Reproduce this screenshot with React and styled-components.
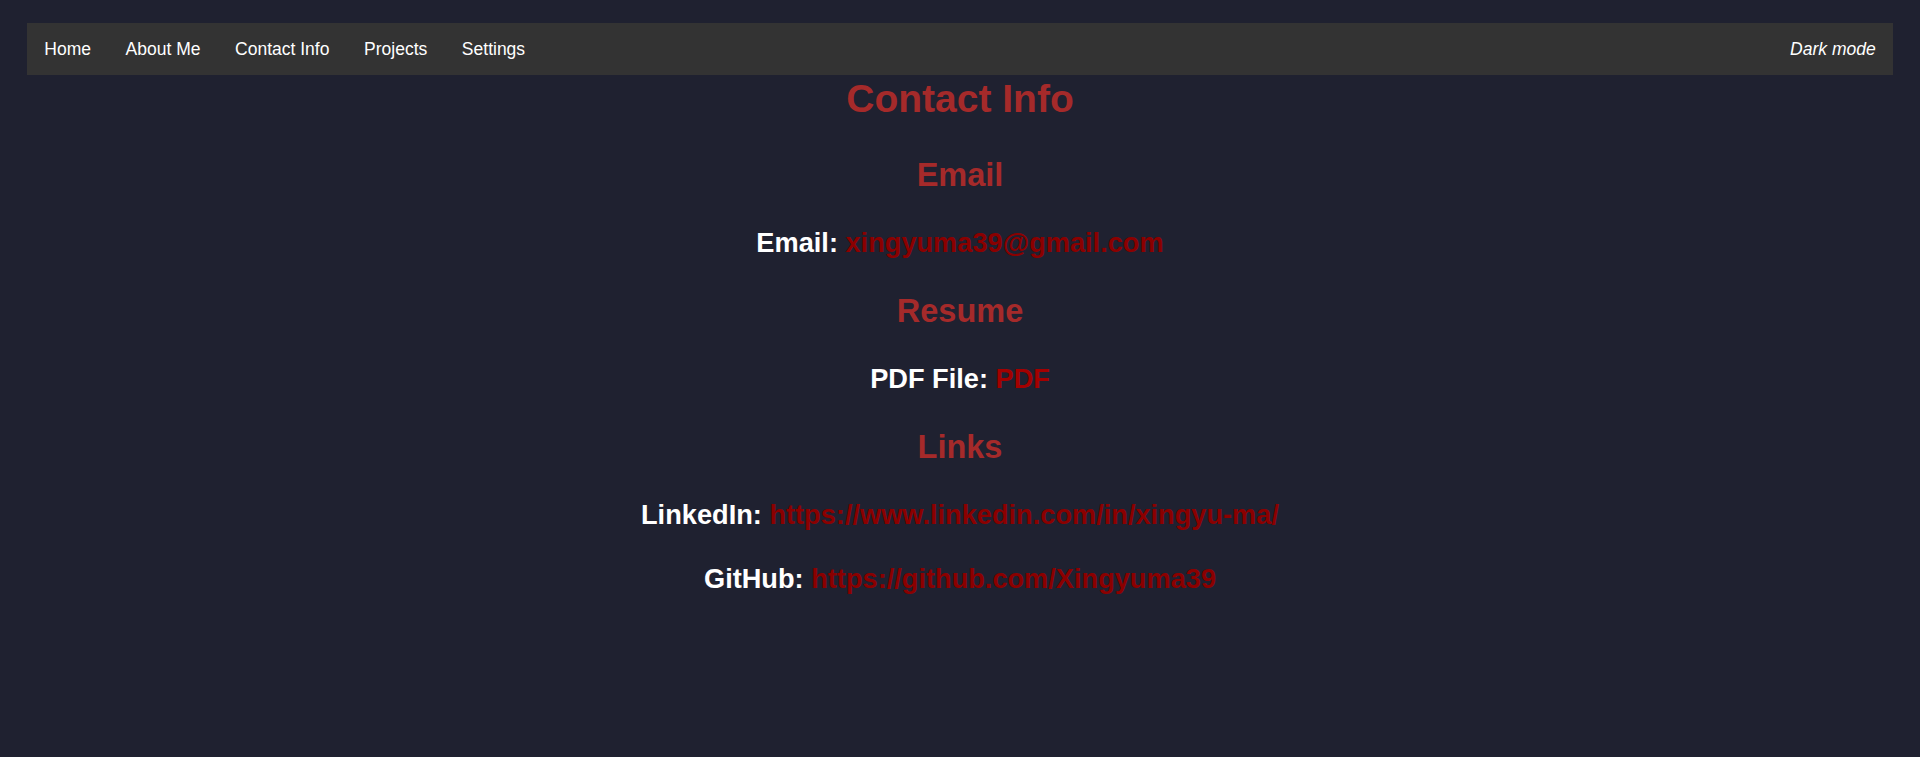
import React from "react";
import styled, { createGlobalStyle } from "styled-components";

const GlobalStyle = createGlobalStyle`
  html, body {
    margin: 0;
    padding: 0;
    background: #1f2130;
    font-family: "Liberation Sans", Arial, sans-serif;
  }
`;

const Page = styled.div`
  min-height: 757px;
  padding: 23px 27px 0 27px;
  box-sizing: border-box;
`;

const NavBar = styled.nav`
  display: flex;
  align-items: center;
  justify-content: space-between;
  height: 52px;
  background: #333333;
`;

const NavList = styled.ul`
  display: flex;
  list-style: none;
  margin: 0;
  padding: 0;
`;

const NavLink = styled.a`
  display: block;
  padding: 0 17.3px;
  color: #ffffff;
  font-size: 17.5px;
  line-height: 52px;
  text-decoration: none;
  font-style: ${(p) => (p.$italic ? "italic" : "normal")};
`;

const Content = styled.main`
  display: flex;
  flex-direction: column;
  align-items: center;
  gap: 34px;
  padding-top: 0.5px;
`;

const Title = styled.h1`
  margin: 0;
  font-size: 39px;
  line-height: 46px;
  font-weight: bold;
  color: #a52a2a;
`;

const Section = styled.h2`
  margin: 0;
  font-size: 32.5px;
  line-height: 38px;
  font-weight: bold;
  color: #a52a2a;
`;

const Line = styled.p`
  margin: 0;
  font-size: 27.2px;
  line-height: 30px;
  font-weight: bold;
  color: #ffffff;
`;

const Link = styled.a`
  color: ${(p) => p.$tone || "#8b0000"};
  text-decoration: none;
`;

const navItems = ["Home", "About Me", "Contact Info", "Projects", "Settings"];

export default function App() {
  return (
    <>
      <GlobalStyle />
      <Page>
        <NavBar>
          <NavList>
            {navItems.map((item) => (
              <li key={item}>
                <NavLink href="#">{item}</NavLink>
              </li>
            ))}
          </NavList>
          <NavLink href="#" $italic>
            Dark mode
          </NavLink>
        </NavBar>
        <Content>
          <Title>Contact Info</Title>
          <Section>Email</Section>
          <Line>
            Email: <Link href="#">xingyuma39@gmail.com</Link>
          </Line>
          <Section>Resume</Section>
          <Line>
            PDF File: <Link href="#" $tone="#a30000">PDF</Link>
          </Line>
          <Section>Links</Section>
          <Line>
            LinkedIn: <Link href="#">https://www.linkedin.com/in/xingyu-ma/</Link>
          </Line>
          <Line>
            GitHub: <Link href="#">https://github.com/Xingyuma39</Link>
          </Line>
        </Content>
      </Page>
    </>
  );
}
